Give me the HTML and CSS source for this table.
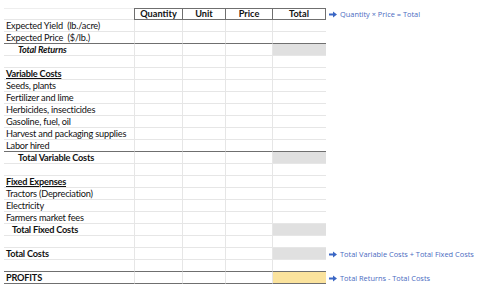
FILE: index.html
```html
<!DOCTYPE html>
<html>
<head>
<meta charset="utf-8">
<link rel="stylesheet" href="styles.css">
</head>
<body>
<div class="sheet">
  <div class="row head">
    <div class="c lab"></div>
    <div class="c h">Quantity</div>
    <div class="c h">Unit</div>
    <div class="c h">Price</div>
    <div class="c h">Total</div>
    <div class="note"><svg class="arr" viewBox="0 0 10 8"><path d="M0 2.8h5V0.3L10 4 5 7.7V5.2H0z"/></svg>Quantity × Price = Total</div>
  </div>
  <div class="row"><div class="c lab">Expected Yield&nbsp; (lb./acre)</div><div class="c"></div><div class="c"></div><div class="c"></div><div class="c"></div></div>
  <div class="row thick"><div class="c lab">Expected Price&nbsp; ($/lb.)</div><div class="c"></div><div class="c"></div><div class="c"></div><div class="c"></div></div>
  <div class="row"><div class="c lab bi ind2">Total Returns</div><div class="c"></div><div class="c"></div><div class="c"></div><div class="c gray"></div></div>
  <div class="row"><div class="c lab"></div><div class="c"></div><div class="c"></div><div class="c"></div><div class="c"></div></div>
  <div class="row"><div class="c lab bu">Variable Costs</div><div class="c"></div><div class="c"></div><div class="c"></div><div class="c"></div></div>
  <div class="row"><div class="c lab">Seeds, plants</div><div class="c"></div><div class="c"></div><div class="c"></div><div class="c"></div></div>
  <div class="row"><div class="c lab">Fertilizer and lime</div><div class="c"></div><div class="c"></div><div class="c"></div><div class="c"></div></div>
  <div class="row"><div class="c lab">Herbicides, insecticides</div><div class="c"></div><div class="c"></div><div class="c"></div><div class="c"></div></div>
  <div class="row"><div class="c lab">Gasoline, fuel, oil</div><div class="c"></div><div class="c"></div><div class="c"></div><div class="c"></div></div>
  <div class="row"><div class="c lab">Harvest and packaging supplies</div><div class="c"></div><div class="c"></div><div class="c"></div><div class="c"></div></div>
  <div class="row thick"><div class="c lab">Labor hired</div><div class="c"></div><div class="c"></div><div class="c"></div><div class="c"></div></div>
  <div class="row"><div class="c lab b ind2">Total Variable Costs</div><div class="c"></div><div class="c"></div><div class="c"></div><div class="c gray"></div></div>
  <div class="row"><div class="c lab"></div><div class="c"></div><div class="c"></div><div class="c"></div><div class="c"></div></div>
  <div class="row"><div class="c lab bu">Fixed Expenses</div><div class="c"></div><div class="c"></div><div class="c"></div><div class="c"></div></div>
  <div class="row"><div class="c lab">Tractors (Depreciation)</div><div class="c"></div><div class="c"></div><div class="c"></div><div class="c"></div></div>
  <div class="row"><div class="c lab">Electricity</div><div class="c"></div><div class="c"></div><div class="c"></div><div class="c"></div></div>
  <div class="row"><div class="c lab">Farmers market fees</div><div class="c"></div><div class="c"></div><div class="c"></div><div class="c"></div></div>
  <div class="row"><div class="c lab b ind1">Total Fixed Costs</div><div class="c"></div><div class="c"></div><div class="c"></div><div class="c gray"></div></div>
  <div class="row"><div class="c lab"></div><div class="c"></div><div class="c"></div><div class="c"></div><div class="c"></div></div>
  <div class="row"><div class="c lab b">Total Costs</div><div class="c"></div><div class="c"></div><div class="c"></div><div class="c gray"></div>
    <div class="note"><svg class="arr" viewBox="0 0 10 8"><path d="M0 2.8h5V0.3L10 4 5 7.7V5.2H0z"/></svg>Total Variable Costs + Total Fixed Costs</div></div>
  <div class="row thick"><div class="c lab"></div><div class="c"></div><div class="c"></div><div class="c"></div><div class="c"></div></div>
  <div class="row thick"><div class="c lab b">PROFITS</div><div class="c"></div><div class="c"></div><div class="c"></div><div class="c yellow"></div>
    <div class="note"><svg class="arr" viewBox="0 0 10 8"><path d="M0 2.8h5V0.3L10 4 5 7.7V5.2H0z"/></svg>Total Returns - Total Costs</div></div>
</div>
</body>
</html>
```
FILE: styles.css
```css
html, body { margin: 0; padding: 0; background: #fff; }
body { padding: 8px 0 0 4px; font-family: Lato, "Liberation Sans", sans-serif; color: #111; }
.sheet { display: flex; flex-direction: column; }
.row { display: grid; grid-template-columns: 130px 48px 43px 47px 54px 150px; height: 12px; }
.c { box-sizing: border-box; height: 12px; border-bottom: 1px solid #e6e6e6; border-left: 1px solid #e6e6e6; font-size: 9.2px; line-height: 12px; letter-spacing: -0.2px; white-space: nowrap; overflow: visible; }
.c.lab { border-left: none; padding-left: 2px; }
.row.thick .c { border-bottom: 1px solid #6f6f6f; }
.head .c.lab { border-bottom: 1px solid #e6e6e6; border-top: 1px solid #eee; }
.head .c.h { border: 1px solid #6f6f6f; border-right: none; text-align: center; font-weight: 700; line-height: 10px; letter-spacing: 0; }
.head .c.h:nth-child(5) { border-right: 1px solid #6f6f6f; }
.b { font-weight: 700; }
.bi { font-weight: 700; font-style: italic; }
.bu { font-weight: 700; text-decoration: underline; }
.ind1 { padding-left: 8px !important; }
.ind2 { padding-left: 14px !important; }
.gray { background: #e0e0e0; }
.yellow { background: #fbe39d; }
.note { display: flex; align-items: center; gap: 3px; padding-left: 3px; font-family: "Open Sans", "Liberation Sans", sans-serif; font-size: 7.4px; color: #4a6bbf; white-space: nowrap; height: 12px; }
.arr { width: 8px; height: 7px; fill: #3a66c4; flex: none; }
```
